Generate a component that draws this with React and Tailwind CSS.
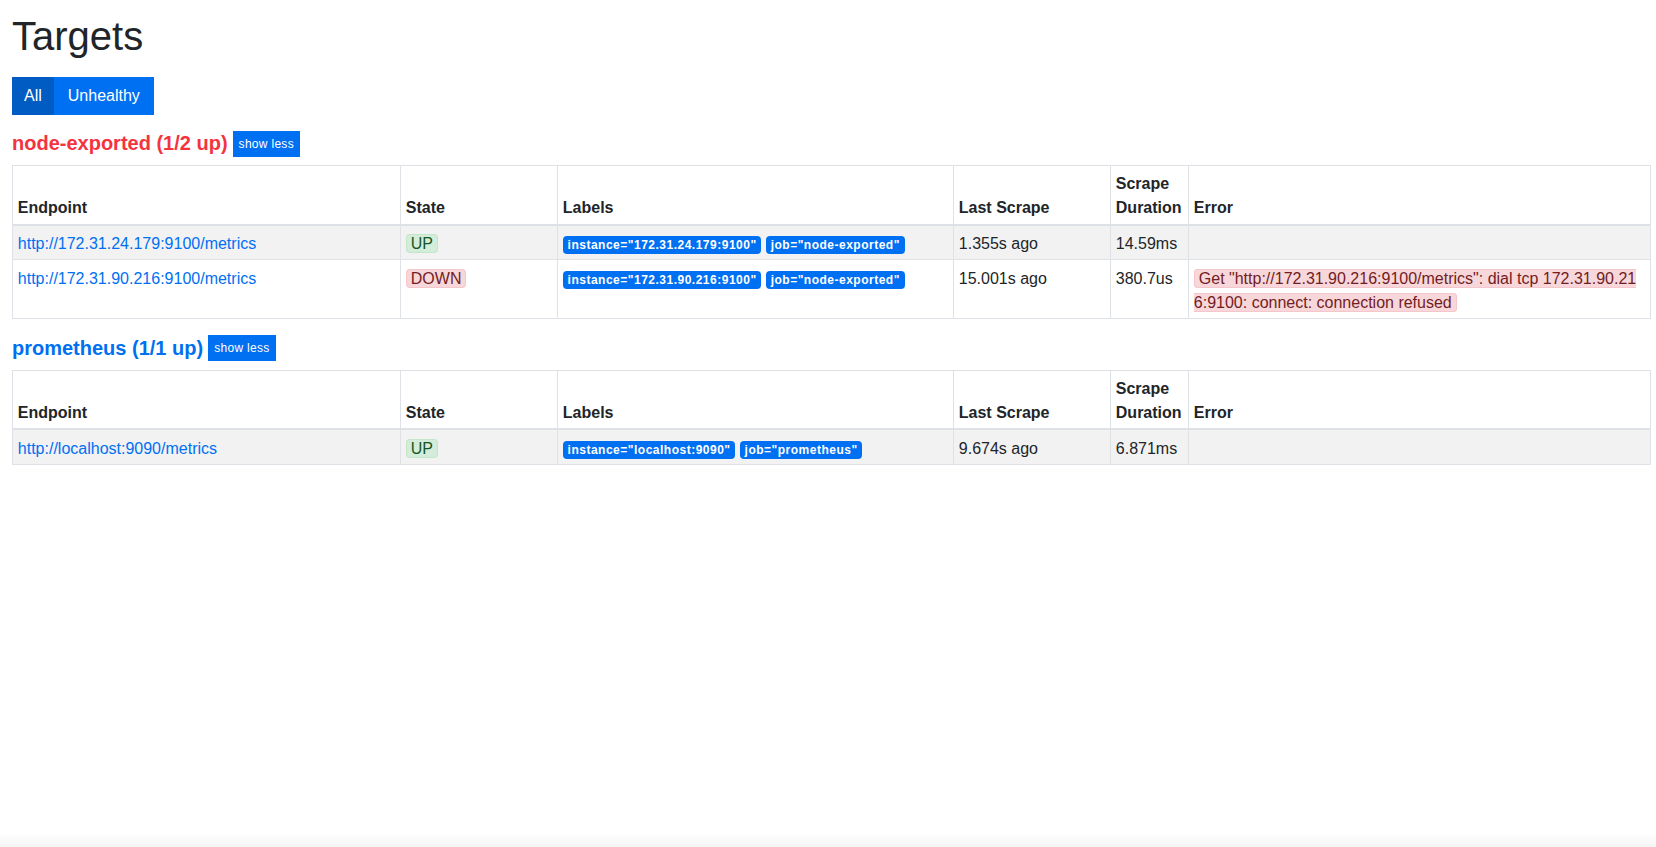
import React from "react";

function StateBadge({ up }) {
  return up ? (
    <span className="rounded-[4px] border border-[#c3e6cb] bg-[#d4edda] px-1 text-[#155724]">UP</span>
  ) : (
    <span className="rounded-[4px] border border-[#f5c6cb] bg-[#f8d7da] px-1 text-[#721c24]">DOWN</span>
  );
}

function Label({ children }) {
  return (
    <span className="inline-block rounded-[4px] bg-[#0070f2] px-[4.8px] py-[3px] align-baseline text-[12px] font-bold leading-none tracking-[0.5px] text-white">
      {children}
    </span>
  );
}

const TH = "border border-b-2 border-[#dee2e6] px-[4.8px] pt-[5.8px] pb-[3.8px]";
const TD = "border border-[#dee2e6] px-[4.8px] pt-[6.6px] pb-[3px]";

function TargetTable({ rows }) {
  return (
    <table className="mb-[16px] w-full table-fixed border-collapse border border-[#dee2e6] text-[16px] leading-6 text-[#212529]">
      <colgroup>
        <col className="w-[388px]" />
        <col className="w-[157px]" />
        <col className="w-[396px]" />
        <col className="w-[157px]" />
        <col className="w-[78px]" />
        <col />
      </colgroup>
      <thead>
        <tr className="text-left align-bottom font-bold">
          <th className={TH}>Endpoint</th>
          <th className={TH}>State</th>
          <th className={TH}>Labels</th>
          <th className={TH}>Last Scrape</th>
          <th className={TH}>Scrape Duration</th>
          <th className={TH}>Error</th>
        </tr>
      </thead>
      <tbody>
        {rows.map((r, i) => (
          <tr key={i} className={i % 2 === 0 ? "bg-[#f2f2f2] align-top" : "align-top"}>
            <td className={TD}>
              <a className="text-[#0070f2]" href="#">{r.endpoint}</a>
            </td>
            <td className={TD}>
              <StateBadge up={r.up} />
            </td>
            <td className={TD}>
              <Label>{r.instance}</Label> <Label>{r.job}</Label>
            </td>
            <td className={TD}>{r.last}</td>
            <td className={TD}>{r.duration}</td>
            <td className={TD + " break-all"}>
              {r.error ? (
                <span className="rounded-[4px] border border-[#f5c6cb] bg-[#f8d7da] px-1 text-[#721c24]">{r.error}</span>
              ) : null}
            </td>
          </tr>
        ))}
      </tbody>
    </table>
  );
}

function PoolHeader({ title, red }) {
  return (
    <div className="mb-[8px] flex items-center gap-[5px]">
      <h2 className={"text-[20px] font-bold leading-[27px] " + (red ? "text-[#f5333f]" : "text-[#0070f2]")}>{title}</h2>
      <button className="h-[26px] bg-[#0070f2] px-[6px] text-[12px] leading-[26px] tracking-[0.3px] text-white">show less</button>
    </div>
  );
}

export default function App() {
  return (
    <div className="min-h-[847px] bg-white pt-3 pl-3 pr-[5px] font-['Liberation_Sans',Arial,sans-serif] text-[#212529]">
      <h1 className="text-[40px] font-normal leading-[48px]">Targets</h1>
      <div className="mt-[17px] mb-[15px] flex">
        <button className="h-[38px] bg-[#005bc2] px-3 text-[16px] text-white">All</button>
        <button className="h-[38px] bg-[#0070f2] px-[14px] text-[16px] text-white">Unhealthy</button>
      </div>

      <PoolHeader title="node-exported (1/2 up)" red />
      <TargetTable
        rows={[
          {
            endpoint: "http://172.31.24.179:9100/metrics",
            up: true,
            instance: 'instance="172.31.24.179:9100"',
            job: 'job="node-exported"',
            last: "1.355s ago",
            duration: "14.59ms",
          },
          {
            endpoint: "http://172.31.90.216:9100/metrics",
            up: false,
            instance: 'instance="172.31.90.216:9100"',
            job: 'job="node-exported"',
            last: "15.001s ago",
            duration: "380.7us",
            error: 'Get "http://172.31.90.216:9100/metrics": dial tcp 172.31.90.216:9100: connect: connection refused',
          },
        ]}
      />

      <PoolHeader title="prometheus (1/1 up)" />
      <TargetTable
        rows={[
          {
            endpoint: "http://localhost:9090/metrics",
            up: true,
            instance: 'instance="localhost:9090"',
            job: 'job="prometheus"',
            last: "9.674s ago",
            duration: "6.871ms",
          },
        ]}
      />
      <div className="pointer-events-none fixed inset-x-0 bottom-0 h-[14px] bg-gradient-to-b from-transparent to-[#f5f5f5]" />
    </div>
  );
}
